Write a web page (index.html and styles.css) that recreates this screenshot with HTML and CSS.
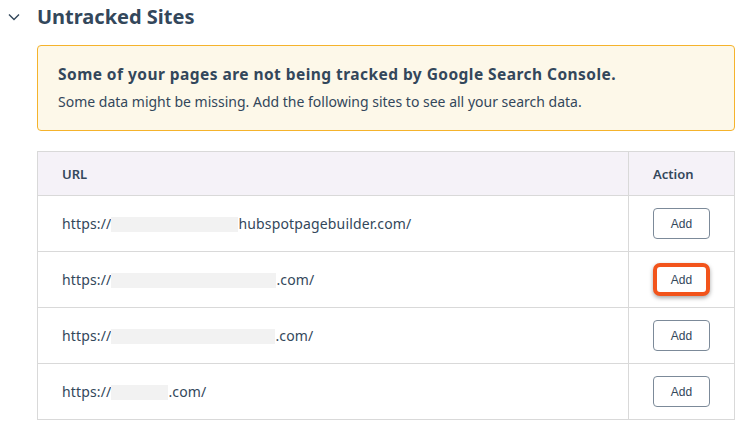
FILE: index.html
```html
<!DOCTYPE html>
<html lang="en">
<head>
    <meta charset="UTF-8">
    <meta name="viewport" content="width=device-width, initial-scale=1.0">
    <title>Untracked Sites</title>
    <link rel="stylesheet" href="styles.css">
</head>
<body>
    <div class="section">
        <!-- Section header -->
        <div class="section-header">
            <svg class="chevron" width="12" height="8" viewBox="0 0 12 8">
                <path d="M1 1.5 L6 6.5 L11 1.5" fill="none" stroke="#33475b" stroke-width="1.4"/>
            </svg>
            <h2 class="title">Untracked Sites</h2>
        </div>

        <!-- Warning alert -->
        <div class="alert">
            <p class="alert-title">Some of your pages are not being tracked by Google Search Console.</p>
            <p class="alert-body">Some data might be missing. Add the following sites to see all your search data.</p>
        </div>

        <!-- Sites table -->
        <table class="sites">
            <thead>
                <tr>
                    <th class="url-col">URL</th>
                    <th class="action-col">Action</th>
                </tr>
            </thead>
            <tbody>
                <tr>
                    <td>https://<span class="redact" style="width:127px"></span>hubspotpagebuilder.com/</td>
                    <td class="action-col"><button class="add">Add</button></td>
                </tr>
                <tr>
                    <td>https://<span class="redact" style="width:165px"></span>.com/</td>
                    <td class="action-col"><button class="add highlight">Add</button></td>
                </tr>
                <tr>
                    <td>https://<span class="redact" style="width:164px"></span>.com/</td>
                    <td class="action-col"><button class="add">Add</button></td>
                </tr>
                <tr>
                    <td>https://<span class="redact" style="width:57px"></span>.com/</td>
                    <td class="action-col"><button class="add">Add</button></td>
                </tr>
            </tbody>
        </table>
    </div>
</body>
</html>
```

FILE: styles.css
```css
body {
    margin: 0;
    background-color: #fff;
    font-family: "Noto Sans", Arial, sans-serif;
    color: #33475b;
}
.section {
    padding: 0 6px 0 37px;
}
.section-header {
    position: relative;
    height: 45px;
}
.chevron {
    position: absolute;
    left: -29px;
    top: 13px;
}
.title {
    margin: 0;
    padding-top: 3px;
    font-size: 20px;
    line-height: 28px;
    font-weight: 700;
    color: #33475b;
}
.alert {
    background-color: #fdf8e9;
    border: 1px solid #f5b32c;
    border-radius: 4px;
    padding: 17px 20px 16px 20px;
    height: 51px;
}
.alert p {
    margin: 0;
}
.alert-title {
    font-size: 15.5px;
    font-weight: 700;
    line-height: 22px;
    letter-spacing: 0.45px;
}
.alert-body {
    margin-top: 7px !important;
    font-size: 14px;
    line-height: 20px;
}
.sites {
    margin-top: 20px;
    width: 698px;
    border-collapse: collapse;
    border: 1px solid #d9d9d9;
    font-size: 14px;
}
.sites th {
    background-color: #f5f2f8;
    height: 43px;
    text-align: left;
    font-size: 13px;
    font-weight: 600;
    padding: 0 24px;
    border-bottom: 1px solid #d9d9d9;
}
.sites td {
    height: 55px;
    padding: 0 24px;
    border-bottom: 1px solid #d9d9d9;
    white-space: nowrap;
    letter-spacing: 0.15px;
}
.sites .action-col {
    width: 57px;
    border-left: 1px solid #d9d9d9;
}
.redact {
    display: inline-block;
    height: 15px;
    vertical-align: -3px;
    background-color: #f2f2f2;
}
.add {
    width: 57px;
    height: 31px;
    border: 1px solid #7c8a99;
    border-radius: 4px;
    background-color: #fff;
    font-family: "Liberation Sans", Arial, sans-serif;
    font-size: 12px;
    letter-spacing: 0;
    color: #33475b;
    cursor: pointer;
}
.add.highlight {
    height: 33px;
    border: 4px solid #f2541b;
    border-radius: 7px;
    box-shadow: 0 2px 4px rgba(0, 0, 0, 0.35);
}
```
